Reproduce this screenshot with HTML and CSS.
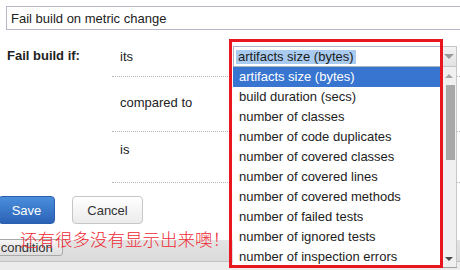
FILE: index.html
```html
<!DOCTYPE html>
<html lang="en">
<head>
    <meta charset="UTF-8">
    <meta name="viewport" content="width=device-width, initial-scale=1.0">
    <title>Fail build on metric change</title>
    <link rel="stylesheet" href="styles.css">
</head>
<body>
    <div class="page">
        <input class="name-field" type="text" value="Fail build on metric change">

        <div class="conditions">
            <div class="label">Fail build if:</div>
            <div class="cell cell-its">its</div>
            <div class="cell cell-compared">compared to</div>
            <div class="cell cell-is">is</div>
        </div>

        <div class="actions">
            <button type="button" class="btn btn-primary">Save</button>
            <button type="button" class="btn">Cancel</button>
        </div>

        <div class="footer">
            <div class="toolbar">
                <button type="button" class="tool-btn">Add condition</button>
            </div>
        </div>
    </div>

    <!-- open metric dropdown -->
    <div class="metric-popup">
        <div class="combo">
            <div class="combo-input"><span class="combo-selected">artifacts size (bytes)</span></div>
            <div class="combo-button"><span class="tri tri-down"></span></div>
        </div>
        <div class="list">
            <ul class="options">
                <li class="option selected">artifacts size (bytes)</li>
                <li class="option">build duration (secs)</li>
                <li class="option">number of classes</li>
                <li class="option">number of code duplicates</li>
                <li class="option">number of covered classes</li>
                <li class="option">number of covered lines</li>
                <li class="option">number of covered methods</li>
                <li class="option">number of failed tests</li>
                <li class="option">number of ignored tests</li>
                <li class="option">number of inspection errors</li>
            </ul>
            <div class="scrollbar">
                <div class="sb-arrow"><span class="tri tri-up"></span></div>
                <div class="sb-track"><div class="sb-thumb"></div></div>
                <div class="sb-arrow"><span class="tri tri-down dark"></span></div>
            </div>
        </div>
    </div>

    <div class="annotation-box"></div>
    <div class="annotation-text">还有很多没有显示出来噢！</div>
</body>
</html>
```

FILE: styles.css
```css
html, body {
    margin: 0;
    padding: 0;
    height: 270px;
    overflow: hidden;
    background-color: #ffffff;
}

body {
    font-family: 'Liberation Sans', Arial, sans-serif;
    font-size: 13px;
    color: #222222;
}

.name-field {
    display: block;
    box-sizing: border-box;
    width: 520px;
    height: 24px;
    margin: 6px 0 0 6px;
    padding: 0 4px;
    border: 1px solid #b5b8c8;
    font-family: inherit;
    font-size: 13px;
    color: #222222;
    outline: none;
}

.conditions {
    display: grid;
    grid-template-columns: 112px 1fr;
    margin-top: 8px;
    line-height: 16px;
}

.label {
    grid-column: 1;
    grid-row: 1;
    padding: 10px 0 0 7px;
    font-weight: bold;
}

.cell {
    grid-column: 2;
    padding-left: 8px;
    border-bottom: 1px dotted #b8b8b8;
}

.cell-its {
    grid-row: 1;
    padding-top: 11px;
    padding-bottom: 11px;
}

.cell-compared {
    grid-row: 2;
    padding-top: 18px;
    padding-bottom: 20px;
}

.cell-is {
    grid-row: 3;
    padding-top: 10px;
    padding-bottom: 24px;
}

.actions {
    display: flex;
    gap: 17px;
    margin-top: 13px;
}

.btn {
    box-sizing: border-box;
    width: 71px;
    height: 28px;
    padding: 0;
    border: 1px solid #c6c6c6;
    border-radius: 4px;
    background: linear-gradient(to bottom, #ffffff, #ebebeb);
    font-family: inherit;
    font-size: 13px;
    color: #333333;
}

.btn-primary {
    width: 57px;
    margin-left: -2px;
    border-color: #2b5fae;
    background: linear-gradient(to bottom, #4a8fdc, #2b62b6);
    color: #ffffff;
}

.footer {
    margin-top: 16px;
    height: 40px;
    background-color: #ececec;
}

.toolbar {
    height: 21px;
    background: linear-gradient(to bottom, #e4e4e4, #dadada);
    border-bottom: 1px solid #c4c4c4;
}

.tool-btn {
    box-sizing: border-box;
    height: 17px;
    margin: -2px 0 0 -36px;
    padding: 0 9px;
    border: 1px solid #a9a9a9;
    border-radius: 3px;
    background: linear-gradient(to bottom, #f6f6f6, #dedede);
    font-family: inherit;
    font-size: 13px;
    line-height: 13px;
    color: #333333;
}

/* dropdown popup over the form */
.metric-popup {
    position: absolute;
    left: 233px;
    top: 46px;
    width: 224px;
}

.combo {
    display: flex;
    height: 21px;
}

.combo-input {
    box-sizing: border-box;
    width: 208px;
    display: flex;
    align-items: center;
    padding-left: 2px;
    border: 1px solid #a9b3c4;
    background-color: #ffffff;
}

.combo-selected {
    padding: 0 2px;
    line-height: 14px;
    background-color: #a9cbef;
    color: #1c1c1c;
}

.combo-button {
    box-sizing: border-box;
    width: 16px;
    display: flex;
    align-items: center;
    justify-content: center;
    border: 1px solid #c4c4c4;
    border-left: none;
    background: linear-gradient(to bottom, #f3f3f3, #e2e2e2);
}

.list {
    display: flex;
    height: 200px;
    border-bottom: 1px solid #a0a0a0;
    background-color: #ffffff;
    overflow: hidden;
}

.options {
    width: 208px;
    margin: 0;
    padding: 0;
    list-style: none;
}

.option {
    height: 20px;
    padding-left: 6px;
    line-height: 20px;
    white-space: nowrap;
    color: #1c1c1c;
}

.option.selected {
    background-color: #3875d0;
    color: #ffffff;
}

.scrollbar {
    box-sizing: border-box;
    width: 16px;
    display: flex;
    flex-direction: column;
    background-color: #f0f0f0;
    border-right: 1px solid #c8c8c8;
}

.sb-arrow {
    height: 17px;
    display: flex;
    align-items: center;
    justify-content: center;
}

.sb-track {
    flex: 1;
}

.sb-thumb {
    width: 9px;
    height: 75px;
    margin: 1px 0 0 5px;
    background-color: #a8a8a8;
}

.tri {
    width: 0;
    height: 0;
    border-left: 4px solid transparent;
    border-right: 4px solid transparent;
}

.combo-button .tri-down {
    border-left-width: 5px;
    border-right-width: 5px;
    border-top: 5px solid #9a9a9a;
}

.tri-up {
    border-bottom: 4px solid #a6a6a6;
}

.tri-down {
    border-top: 4px solid #8a8a8a;
}

.tri-down.dark {
    border-top-color: #4a4a4a;
}

/* screenshot annotation */
.annotation-box {
    position: absolute;
    left: 229px;
    top: 39px;
    width: 214px;
    height: 229px;
    box-sizing: border-box;
    border: 3px solid #e8161f;
}

.annotation-text {
    position: absolute;
    left: 20px;
    top: 229px;
    font-family: 'Noto Sans CJK SC', sans-serif;
    font-size: 17.5px;
    font-weight: 300;
    line-height: 20px;
    color: #ee2a33;
}
```
